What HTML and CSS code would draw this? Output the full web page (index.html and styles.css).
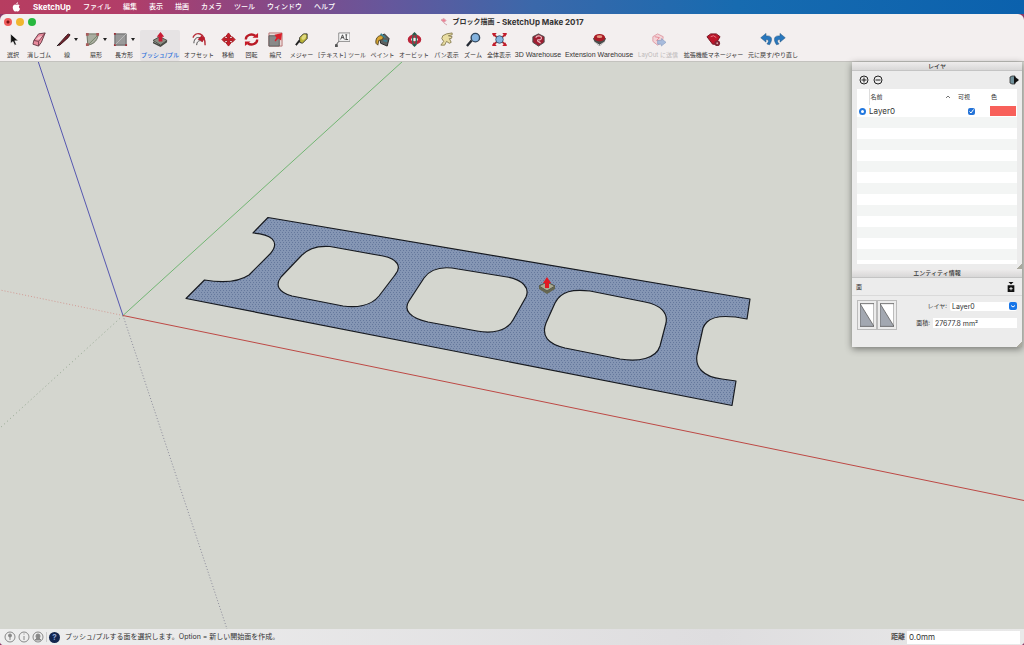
FILE: index.html
```html
<!DOCTYPE html>
<html lang="ja">
<head>
<meta charset="utf-8">
<title>ブロック描画 - SketchUp Make 2017</title>
<link rel="stylesheet" href="styles.css">
</head>
<body>
<nav class="menubar" aria-label="メニュー">
  <svg class="apple" viewBox="0 0 10 12"><path fill="#fff" d="M6.8.2C6.9 1.6 5.8 2.7 4.7 2.6 4.6 1.4 5.700.3 6.8.2zM8.900 4C7.300 5 7.600 7.300 9.300 8 8.700 9.700 7.600 11.400 6.600 11.400 5.900 11.400 5.700 11 4.900 11 4 11 3.800 11.400 3.100 11.400 1.800 11.300.5 8.700.5 6.600.5 3.300 3 2.500 4.200 3.200 4.800 3.500 5 3.500 5.600 3.200 6.700 2.700 8 2.800 8.900 4z"/></svg>
  <button class="menu app">SketchUp</button>
  <button class="menu">ファイル</button>
  <button class="menu">編集</button>
  <button class="menu">表示</button>
  <button class="menu">描画</button>
  <button class="menu">カメラ</button>
  <button class="menu">ツール</button>
  <button class="menu">ウィンドウ</button>
  <button class="menu">ヘルプ</button>
</nav>
<div class="window">
  <header class="titlebar">
    <div class="lights">
      <button class="light close" aria-label="閉じる"></button>
      <button class="light minimise" aria-label="しまう"></button>
      <button class="light full" aria-label="拡大"></button>
    </div>
    <h1 class="title"><svg class="doc" viewBox="0 0 8 8"><path d="M1 2l3-1.500 2 2-2 2zM4 5l3 2" fill="#ee7f92" stroke="#d8a6b0"/></svg>ブロック描画 <span class="latin">- SketchUp Make 2017</span></h1>
  </header>
  <div class="toolbar" role="toolbar">
    <button class="tool"><svg class="icon" viewBox="0 0 16 16"><path d="M5 2v10l2.500-2 1.800 4 1.700-.8-1.700-3.800H13z" fill="#111" stroke="#fff" stroke-width=".5"/></svg><span>選択</span></button>
    <button class="tool"><svg class="icon" viewBox="0 0 16 16"><path d="M7 2l7-1-4 10-3 4-6-2 1-4z" fill="#e98b9d" stroke="#633842"/><path d="M2 9l5 1 7-9M7 10v5" stroke="#753e4c" fill="none"/><path d="M7 5l4-1-3 4-4 0z" fill="#f7c4cc"/></svg><span>消しゴム</span></button>
    <button class="tool"><span class="pair"><svg class="icon" viewBox="0 0 16 16"><path d="M2 14l9-10 2-2 2 1-2 3L4 14z" fill="#74222d" stroke="#37191d"/><path d="M1 15l3-3" stroke="#111"/></svg><i class="caret"></i></span><span>線</span></button>
    <button class="tool"><span class="pair"><svg class="icon" viewBox="0 0 16 16"><path d="M2 2h12c0 6-4 11-11 12z" fill="#a9ada0" stroke="#69705f"/><path d="M3 14L14 3" stroke="#758567"/><path d="M1 1h3v3H1zM12 1h3v3h-3zM1 12h3v3H1z" fill="#a85c5c"/></svg><i class="caret"></i></span><span>扇形</span></button>
    <button class="tool"><span class="pair"><svg class="icon" viewBox="0 0 16 16"><path d="M2 2h12v12H2z" fill="#999" stroke="#5e5e5e"/><path d="M2 14L14 2" stroke="#bbb"/><path d="M1 1h2v2H1zM13 13h2v2h-2zM1 13h2v2H1z" fill="#9c3038"/></svg><i class="caret"></i></span><span>長方形</span></button>
    <button class="tool selected"><svg class="icon" viewBox="0 0 16 16"><path d="M0 9l7-4 8 4-7 5z" fill="#8a8d82" stroke="#454740"/><path d="M0 10v2l8 4 7-5V9l-7 5z" fill="#454842"/><path d="M6 10V5H4l4-5 4 5h-2v5z" fill="#c81d35"/></svg><span>プッシュ/プル</span></button>
    <button class="tool"><svg class="icon" viewBox="0 0 16 16"><path d="M1 6C4-1 14 0 14 14" fill="none" stroke="#b62d38" stroke-width="1.500"/><path d="M2 12c0-5 4-8 8-5M5 14c0-4 3-6 6-4" fill="none" stroke="#444"/><path d="M6 8l5-5 0 2 3 1-3 5-2-2z" fill="#b91d2d"/></svg><span>オフセット</span></button>
    <button class="tool"><svg class="icon" viewBox="0 0 16 16"><path d="M8 1l3 4H9v2h3V5l3 3-3 3V9H9v2h2l-3 4-3-4h2V9H4v2L1 8l3-3v2h3V5H5z" fill="#c91e29" stroke="#a5151d"/></svg><span>移動</span></button>
    <button class="tool"><svg class="icon" viewBox="0 0 16 16"><path d="M2 8a6 5 0 0 1 10-4M14 8a6 5 0 0 1-10 4" fill="none" stroke="#b91b26" stroke-width="2.500"/><path d="M9 6h6V1zM7 10H1v5z" fill="#c71926"/></svg><span>回転</span></button>
    <button class="tool"><svg class="icon" viewBox="0 0 16 16"><path d="M1 1h14v14H1z" fill="#ead8d6" stroke="#b77373"/><path d="M1 4h11v11H1z" fill="#898989" stroke="#5d5d5d"/><path d="M7 9l2-3-2-3 8-2-1 8-3-2-3 3z" fill="#d9202b"/></svg><span>縮尺</span></button>
    <button class="tool"><svg class="icon" viewBox="0 0 16 16"><path d="M6 6l4-4h4v5l-5 5-3-1z" fill="#bdb638" stroke="#34352c"/><ellipse cx="10.500" cy="5.500" rx="2" ry="3" fill="#e0da7e" transform="rotate(35 10.500 5.500)"/><path d="M6 9l-4 5" stroke="#222" stroke-width="2"/></svg><span>メジャー</span></button>
    <button class="tool"><svg class="icon" viewBox="0 0 16 16"><path d="M4 1h12v9H4z" fill="#fafafa" stroke="#888"/><path d="M6 8l2-5 2 5M7 6h2M12 3v5M11 3h2M11 8h3M4 10l-3 4" stroke="#444" fill="none"/><path d="M0 13h3v3H0z" fill="#555"/></svg><span>[テキスト] ツール</span></button>
    <button class="tool"><svg class="icon" viewBox="0 0 16 16"><path d="M5 6l5-4 5 5-2 8-7-3z" fill="#5d6060" stroke="#222"/><path d="M1 12C0 5 6 2 9 5l-1 3-4 1-1 5z" fill="#d9a632" stroke="#544728"/><path d="M6 2l5 4M9 9l4 1" stroke="#3a8292" stroke-width="2"/></svg><span>ペイント</span></button>
    <button class="tool"><svg class="icon" viewBox="0 0 16 16"><ellipse cx="8" cy="8" rx="5.500" ry="3.500" fill="none" stroke="#bc263b" stroke-width="3.500"/><ellipse cx="8" cy="8" rx="2" ry="5.500" fill="none" stroke="#356c5b" stroke-width="1.500"/><path d="M5 3l3-3 3 3zM5 13l3 3 3-3z" fill="#28594a"/></svg><span>オービット</span></button>
    <button class="tool"><svg class="icon" viewBox="0 0 16 16"><path d="M2 14l3-4-2-3 1-3 4-2 6-1 0 2-4 1 4 1-1 2-2 0 2 4-2 1-3-2-2 4z" fill="#e9dda2" stroke="#8b8054"/></svg><span>パン表示</span></button>
    <button class="tool"><svg class="icon" viewBox="0 0 16 16"><circle cx="10" cy="6" r="4.500" fill="#83b2de" stroke="#31475d" stroke-width="1.500"/><path d="M6 9l-5 6" stroke="#252b34" stroke-width="2.500"/></svg><span>ズーム</span></button>
    <button class="tool"><svg class="icon" viewBox="0 0 16 16"><path d="M1 2l14 12M15 2L1 14" stroke="#b4252b" stroke-width="2"/><circle cx="8" cy="8" r="4" fill="#85b5df" stroke="#3b5978"/><path d="M0 1h5L2 5zM16 1h-5l3 4zM0 15h5l-3-4zM16 15h-5l3-4z" fill="#c41c2c"/></svg><span>全体表示</span></button>
    <button class="tool"><svg class="icon" viewBox="0 0 16 16"><path d="M2 5l6-3 6 3v6l-6 4-6-4z" fill="#9f1e31" stroke="#484848"/><path d="M5 6c2-3 7-2 6 1s-4 0-4 2 3 1 3 3" fill="none" stroke="#f0bfc4" stroke-width="1.200"/></svg><span class="latin">3D Warehouse</span></button>
    <button class="tool"><svg class="icon" viewBox="0 0 16 16"><path d="M1 7l7-5 7 5-2 4-5 4-5-4z" fill="#4b4e4d"/><ellipse cx="8" cy="6" rx="6" ry="4" fill="#a91c26"/><ellipse cx="8" cy="5" rx="3" ry="1.500" fill="#e69a81"/><path d="M3 11l5 3 5-3" stroke="#ddd" fill="none"/></svg><span class="latin">Extension Warehouse</span></button>
    <button class="tool" disabled><svg class="icon" viewBox="0 0 16 16"><path d="M2 5l5-3 6 3-1 6-5 3-5-4z" fill="#f3d4d8" stroke="#df9ca5"/><path d="M4 5l5 1-3 3 4 1" fill="none" stroke="#e48692"/><path d="M7 9h4V7l5 4-5 4v-2H7z" fill="#a7bbdc" stroke="#8399bd" stroke-width=".6"/></svg><span>LayOut に送信</span></button>
    <button class="tool"><svg class="icon" viewBox="0 0 16 16"><path d="M1 5l4-3h6l4 3-5 8H7z" fill="#bd1629" stroke="#721523"/><path d="M5 5l3-1 3 2" stroke="#e77c86" fill="none"/><circle cx="12" cy="12" r="3" fill="#812533"/><circle cx="12" cy="12" r="1" fill="#dba2a7"/></svg><span>拡張機能マネージャー</span></button>
    <button class="tool"><svg class="icon undo" viewBox="0 0 32 16"><path id="undo-arrow" d="M2 6l6-5v3c7-1 8 4 4 10l-3-1c3-3 2-5-1-5v3z" fill="#2877bd" stroke="#285981" stroke-width=".6"/><use href="#undo-arrow" transform="matrix(-1 0 0 1 32 0)"/></svg><span>元に戻す/やり直し</span></button>
  </div>
  <main class="workspace">
    <svg class="model" viewBox="0 62 1024 567" preserveAspectRatio="xMinYMin slice" aria-label="ブロックのモデル">
      <defs><pattern id="dots" width="3" height="4" patternUnits="userSpaceOnUse"><rect width="3" height="4" fill="#8596b4"/><path d="M0 0h1v1H0zM1 2h1v1H1z" fill="#65789c"/></pattern></defs>
      <path d="M123 315.500L0 290" stroke="#d39a94" stroke-dasharray="1 2"/>
      <path d="M123 315.500L0 428" stroke="#93a68f" stroke-dasharray="1 3"/>
      <path d="M123 315.500L227 629" stroke="#8c8c9b" stroke-dasharray="1 2"/>
      <path d="M123 315.500L38 61" stroke="#5657b0"/>
      <path d="M123 315.500L403 61" stroke="#72b573"/>
      <path d="M123 315.500L1024 500.500" stroke="#bd4945"/>
      <path fill="url(#dots)" fill-rule="evenodd" stroke="#171a20" stroke-width="1.200" stroke-linejoin="round" d="M268 217.500L750 299 747 319C727 315 713 316 707 322Q704 325 703 328L697 355C695 367 703 377 722 379L736 381 732 405.500 186 298.500 204.500 280Q234 285 249 275L270.500 253.500C281 241 270 234 253 233Z
      M281 277L301 256Q311 245 330 246.500L383 256C398 259 402 267 395 275L379 296C371 306 356 308 343 306L292 296C278 292 275 285 281 277Z
      M409 301L424 278C431 268 443 266 458 269L507 277C523 280 530 288 526 297L513 320C507 331 492 334 477 331L428 322C410 318 403 310 409 301Z
      M546 323L555 303C561 291 573 289 590 291L645 302C661 305 668 313 666 323L660 346C656 359 638 362 620 359L565 348C548 344 541 336 546 323Z"/>
      <g class="cursor"><path d="M539 286l8-4 8 4-8 5z" fill="#aaa890" stroke="#4e5042"/><path d="M539 286v3l8 5 8-5v-3l-8 5z" fill="#656650"/><path d="M545 288v-5h-2l4-6 4 6h-2v5z" fill="#e01923"/></g>
    </svg>
    <aside class="palettes">
      <section>
        <h2 class="palette-title">レイヤ</h2>
        <div class="layer-tools">
          <button class="round" aria-label="レイヤを追加"><svg viewBox="0 0 10 10"><circle cx="5" cy="5" r="4"/><path d="M2.500 5h5M5 2.500v5"/></svg></button>
          <button class="round" aria-label="レイヤを削除"><svg viewBox="0 0 10 10"><circle cx="5" cy="5" r="4"/><path d="M2.500 5h5"/></svg></button>
          <button class="round detail" aria-label="詳細"><svg viewBox="0 0 10 10"><path d="M1 2l2-1h3v8H3L1 8z" fill="#70909a" stroke="#333" stroke-width=".8"/><path d="M5 1l5 4-5 4z" fill="#111"/></svg></button>
        </div>
        <table class="layers">
          <thead><tr><th class="c-radio"></th><th><span class="sort">名前<svg viewBox="0 0 6 4"><path d="M1 3l2-2 2 2"/></svg></span></th><th class="c-visible">可視</th><th class="c-color">色</th></tr></thead>
          <tbody>
            <tr><td><input class="current" type="radio" name="layer" checked aria-label="Layer0 を使用"></td><td class="name">Layer0</td><td><input class="visible" type="checkbox" checked aria-label="Layer0 を表示"></td><td><button class="swatch" aria-label="色"></button></td></tr>
          </tbody>
        </table>
        <div class="empty-rows"></div>
        <div class="grip"></div>
      </section>
      <section>
        <h2 class="palette-title">エンティティ情報</h2>
        <div class="entity-head"><span>面</span><button class="round" aria-label="詳細を隠す"><svg viewBox="0 0 10 12"><path d="M2 0h6L5 3zM1 4h8v8H1z" fill="#111"/><path d="M3 8h4M5 6v4" stroke="#fff"/></svg></button></div>
        <div class="entity">
          <div class="faces">
            <button class="face" aria-label="表面"><svg viewBox="0 0 16 26"><path d="M0 0h16v26H0z" fill="#fff"/><path d="M0 0l16 26H0z" fill="#a3a8b1"/><path d="M0 0h16v26H0zL16 26" fill="none" stroke="#666"/></svg></button>
            <button class="face" aria-label="裏面"><svg viewBox="0 0 16 26"><path d="M0 0h16v26H0z" fill="#fff"/><path d="M0 0l16 26H0z" fill="#a3a8b1"/><path d="M0 0h16v26H0zL16 26" fill="none" stroke="#666"/></svg></button>
          </div>
          <div class="fields">
            <div class="field">
              <label for="layer">レイヤ:</label>
              <div class="select"><select id="layer"><option>Layer0</option></select><svg viewBox="0 0 8 8"><rect width="8" height="8" rx="2" fill="#1675e8"/><path d="M2 3.500l2 1.500 2-1.500" fill="none" stroke="#fff"/></svg></div>
            </div>
            <div class="field">
              <label for="area">面積:</label>
              <input id="area" class="area" value="27677.8 mm²" readonly>
            </div>
          </div>
        </div>
        <div class="grip"></div>
      </section>
    </aside>
  </main>
  <footer class="status">
    <button class="info" aria-label="位置情報"><svg viewBox="0 0 12 12"><circle cx="6" cy="6" r="5"/><circle cx="6" cy="4.500" r="1.500" fill="#888"/><path d="M6 5v4"/></svg></button>
    <button class="info" aria-label="クレジット"><svg viewBox="0 0 12 12"><circle cx="6" cy="6" r="5"/><path d="M6 2.500v1M6 5v4"/></svg></button>
    <button class="info" aria-label="サインイン"><svg viewBox="0 0 12 12"><circle cx="6" cy="6" r="5"/><path d="M4 5a2 2 0 1 1 4 0q0 2-1 2l2 2H3l2-2q-1 0-1-2z" fill="#888"/></svg></button>
    <i class="divider"></i>
    <button class="info help" aria-label="ヘルプ">?</button>
    <p class="hint">プッシュ/プルする面を選択します。Option = 新しい開始面を作成。</p>
    <label class="measure-label" for="measure">距離</label>
    <input class="measure" id="measure" value="0.0mm">
  </footer>
</div>
</body>
</html>
```
FILE: styles.css
```css
* { box-sizing: border-box; }
html, body { height: 100%; }
body {
  margin: 0;
  display: flex;
  flex-direction: column;
  overflow: hidden;
  font: 6px/8px Inter, "Noto Sans CJK JP", sans-serif;
  color: #333;
  background: #8b3a68;
}
button, input, select { font: inherit; color: inherit; margin: 0; padding: 0; border: 0; background: none; }
svg { display: block; }
h1, h2, p { margin: 0; }

.menubar {
  flex: none;
  display: flex;
  align-items: center;
  gap: 12px;
  height: 14px;
  padding: 0 12px;
  background: linear-gradient(90deg, #b73d60 0, #b23d68 12%, #8d4682 24%, #65579c 38%, #3b68aa 52%, #176bb0 72%, #0b61ad 100%);
}
.apple { width: 9px; height: 10px; }
.menu { color: #fff; font-size: 7px; font-weight: 500; line-height: 12px; white-space: nowrap; }
.app { font-size: 8px; font-weight: 700; }

.window {
  flex: 1;
  min-height: 0;
  display: flex;
  flex-direction: column;
  border-radius: 6px 6px 4px 4px;
  overflow: hidden;
  background: #f3efef;
}
.titlebar {
  flex: none;
  display: grid;
  grid-template-columns: 1fr auto 1fr;
  align-items: center;
  height: 16px;
  padding: 0 4px;
}
.lights { display: flex; gap: 4px; }
.light { width: 8px; height: 8px; border-radius: 50%; }
.close { background: radial-gradient(circle, #7c1414 0 1px, #ef5a5a 2px); }
.minimise { background: #f0b62f; }
.full { background: #28b83f; }
.title { display: flex; align-items: center; gap: 2px; font-size: 7px; font-weight: 700; line-height: 12px; }
.title .latin { font-size: 8px; }
.doc { width: 8px; height: 8px; margin-right: 2px; }

.toolbar {
  flex: none;
  display: grid;
  grid-template-columns: 26px 26px 30px 28px 28px 44px 34px 24px 23px 25px 27px 54px 27px 36px 29px 24px 28px 50px 72px 46px 65px 54px;
  height: 32px;
  border-bottom: 1px solid #c3c2be;
}
.tool {
  display: flex;
  flex-direction: column;
  align-items: center;
  justify-content: center;
  gap: 4px;
  white-space: nowrap;
}
.tool > span:last-child { width: 100%; display: flex; justify-content: center; }
.tool .latin { font-family: "Liberation Sans", sans-serif; font-size: 7px; }
.tool:disabled { color: #bbb8b8; }
.selected { margin: 0 2px; border-radius: 2px; background: #e6e3e4; color: #286fdb; font-weight: 500; }
.icon { width: 15px; height: 15px; }
.undo { width: 28px; height: 15px; }
.pair { display: flex; align-items: center; gap: 3px; }
.caret { border: 2px solid transparent; border-top: 3px solid #222; border-bottom: 0; }

.workspace { flex: 1; min-height: 0; position: relative; background: #d4d6cf; }
.model { width: 100%; height: 100%; fill: none; }

.palettes {
  position: absolute;
  top: 0;
  right: 2px;
  width: 170px;
  background: #ececec;
  box-shadow: 0 2px 7px rgba(0, 0, 0, .45);
}
.palette-title {
  height: 9px;
  font-size: 6px;
  font-weight: 500;
  line-height: 8px;
  text-align: center;
  background: linear-gradient(#eeecec, #d8d7d7);
  border-bottom: 1px solid #c4c4c4;
}
.layer-tools { display: flex; align-items: center; gap: 4px; height: 18px; padding: 0 3px 0 7px; }
.round { width: 10px; height: 10px; }
.round svg { width: 10px; height: 10px; fill: none; stroke: #222; }
.round.detail { margin-left: auto; }
.detail svg, .entity-head svg { stroke: none; }
.layers { width: 160px; margin-left: 5px; table-layout: fixed; border-collapse: collapse; background: #fff; font-size: 7px; }
.layers th { height: 16px; padding: 0; font-size: 6px; font-weight: 400; text-align: left; }
.layers td { height: 12px; padding: 0; line-height: 10px; }
.layers .name { font-size: 8px; }
.c-radio { width: 12px; border-right: 1px solid #ddd; }
.c-visible { width: 33px; }
.c-color { width: 27px; }
.layers th.c-visible, .layers th.c-color { padding-left: 1px; }
.sort { display: flex; align-items: center; justify-content: space-between; padding: 0 6px 0 1px; }
.sort svg { width: 6px; height: 4px; fill: none; stroke: #777; }
.current, .visible { display: block; appearance: none; width: 7px; height: 7px; }
.current { margin-left: 2px; border: 2px solid #2278df; border-radius: 50%; background: #fff; }
.visible {
  margin-left: 11px;
  border-radius: 2px;
  background: #2473d8 url("data:image/svg+xml,%3Csvg xmlns='http://www.w3.org/2000/svg' viewBox='0 0 7 7'%3E%3Cpath d='M1.500 3.500l1.500 1.500 2.500-3.500' fill='none' stroke='white'/%3E%3C/svg%3E");
}
.swatch { display: block; width: 26px; height: 10px; background: #f8605a; }
.empty-rows { height: 147px; margin: 0 5px; background: repeating-linear-gradient(#f3f5f4 0 11px, #fff 11px 22px); }
.grip { width: 5px; height: 5px; margin-left: auto; background: linear-gradient(135deg, transparent 50%, #aaa99f 50%); }
.entity-head { display: flex; align-items: center; justify-content: space-between; height: 18px; padding: 0 6px 0 4px; border-bottom: 1px solid #dadada; }
.entity { display: flex; gap: 12px; height: 46px; padding: 4px 5px 0; }
.faces { display: flex; height: 30px; }
.face { padding: 2px; border: 1px solid #bbb; }
.face svg { width: 14px; height: 24px; }
.fields { flex: 1; display: flex; flex-direction: column; gap: 5px; }
.field { display: flex; align-items: center; justify-content: flex-end; gap: 3px; height: 12px; white-space: nowrap; }
.select { position: relative; width: 67px; }
.select select { display: block; width: 100%; height: 9px; appearance: none; background: #fff; border-radius: 2px; font-size: 7px; line-height: 9px; padding-left: 2px; }
.select svg { position: absolute; right: 0; top: 0; width: 8px; height: 8px; pointer-events: none; }
.area { width: 84px; height: 10px; padding-left: 2px; background: #fff; font-size: 7px; }

.status { flex: none; display: flex; align-items: center; gap: 2px; height: 16px; padding: 0 4px; background: linear-gradient(90deg, #eee, #dedddf 70%, #e9e9e9); }
.info { width: 12px; height: 12px; }
.info svg { width: 12px; height: 12px; fill: none; stroke: #888; }
.divider { width: 1px; height: 10px; background: #ccc; }
.help { width: 11px; height: 11px; border-radius: 50%; background: #14264f; color: #91a5d3; font-size: 8px; font-weight: 700; line-height: 11px; }
.hint { flex: 1; padding-left: 3px; font-size: 7px; line-height: 12px; }
.measure-label { font-size: 7px; font-weight: 500; }
.measure { width: 113px; height: 13px; padding-left: 2px; background: #fff; font-size: 8px; }
```
